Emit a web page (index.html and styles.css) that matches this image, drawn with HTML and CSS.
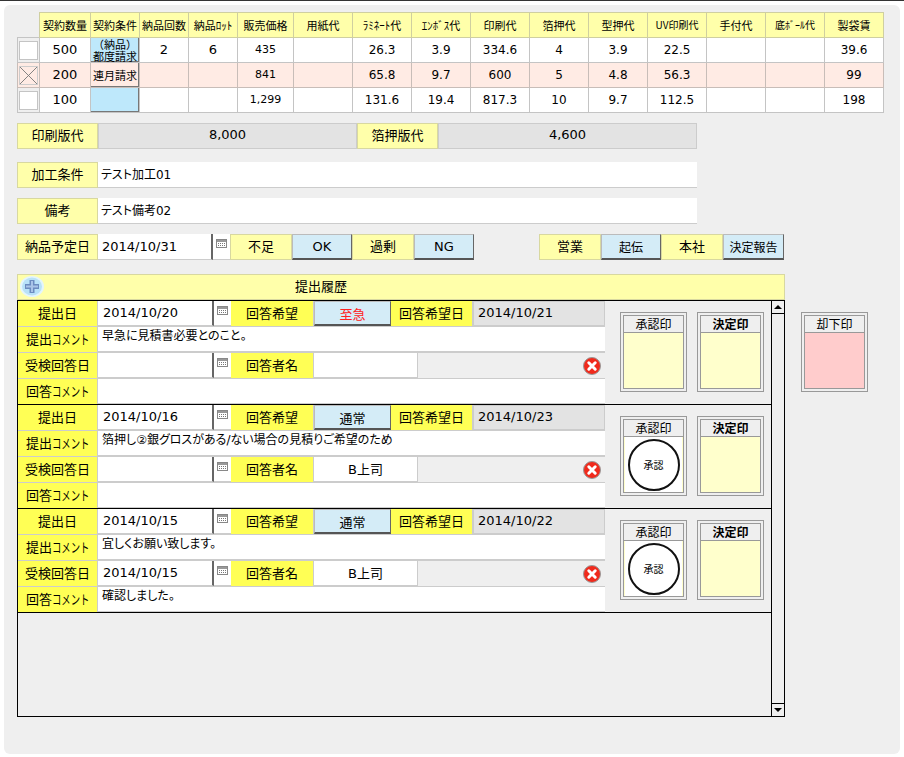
FILE: index.html
```html
<!DOCTYPE html>
<html lang="ja">
<head>
  <meta charset="UTF-8">
  <title>見積</title>
  <link rel="stylesheet" href="styles.css">
</head>
<body>
<svg class="defs" width="0" height="0">
  <symbol id="cal" viewBox="0 0 11 9">
    <rect x="0.5" y="0.5" width="10" height="8" fill="#fff" stroke="#888"/>
    <rect x="1" y="1" width="9" height="2" fill="#999"/>
    <path d="M2 4.5h7M2 6.5h7" stroke="#777" stroke-dasharray="1 1"/>
  </symbol>
  <symbol id="del" viewBox="0 0 18 18">
    <circle cx="9" cy="9" r="8.5" fill="#f02a1c" stroke="#999"/>
    <path d="M5.8 5.8l6.4 6.4M12.2 5.8l-6.4 6.4" stroke="#fff" stroke-width="3" stroke-linecap="round"/>
  </symbol>
</svg>

<div class="panel">
  <table class="prices">
    <tr>
      <th class="blank"></th><th>契約数量</th><th>契約条件</th><th>納品回数</th><th>納品ﾛｯﾄ</th><th>販売価格</th><th>用紙代</th><th>ﾗﾐﾈｰﾄ代</th><th>ｴﾝﾎﾞｽ代</th><th>印刷代</th><th>箔押代</th><th>型押代</th><th class="tiny">UV印刷代</th><th>手付代</th><th class="tiny">底ﾎﾞｰﾙ代</th><th>製袋賃</th>
    </tr>
    <tr>
      <td class="chk"><span class="box"></span></td><td class="big">500</td><td class="term">（納品）<br>都度請求</td><td class="big">2</td><td class="big">6</td><td class="price">435</td><td></td><td>26.3</td><td>3.9</td><td>334.6</td><td>4</td><td>3.9</td><td>22.5</td><td></td><td></td><td>39.6</td>
    </tr>
    <tr class="off">
      <td class="chk"><span class="box x">
        <svg width="19" height="19" viewBox="0 0 19 19"><path d="M0 0l19 19M19 0L0 19" stroke="#777"/></svg>
      </span></td><td class="big">200</td><td class="term plain">連月請求</td><td></td><td></td><td class="price">841</td><td></td><td>65.8</td><td>9.7</td><td>600</td><td>5</td><td>4.8</td><td>56.3</td><td></td><td></td><td>99</td>
    </tr>
    <tr>
      <td class="chk"><span class="box"></span></td><td class="big">100</td><td class="term"></td><td></td><td></td><td class="price">1,299</td><td></td><td>131.6</td><td>19.4</td><td>817.3</td><td>10</td><td>9.7</td><td>112.5</td><td></td><td></td><td>198</td>
    </tr>
  </table>

  <div class="line w680 first">
    <div class="lbl">印刷版代</div>
    <div class="val gray center grow">8,000</div>
    <div class="lbl">箔押版代</div>
    <div class="val gray center grow">4,600</div>
  </div>
  <div class="line w680 gap-l">
    <div class="lbl">加工条件</div>
    <div class="val grow note">テスト加工01</div>
  </div>
  <div class="line w680 gap-s">
    <div class="lbl">備考</div>
    <div class="val grow note">テスト備考02</div>
  </div>

  <div class="line w768 gap-s">
    <div class="lbl">納品予定日</div>
    <div class="val date">2014/10/31</div>
    <div class="calcell"><svg width="11" height="9"><use href="#cal"/></svg></div>
    <div class="lbl narrow">不足</div>
    <div class="btn">OK</div>
    <div class="lbl narrow">過剰</div>
    <div class="btn">NG</div>
    <div class="lbl narrow push">営業</div>
    <div class="btn sm">起伝</div>
    <div class="lbl narrow">本社</div>
    <div class="btn sm tight">決定報告</div>
  </div>

  <div class="history">
    <div class="left">
      <div class="hist-title">
        <svg class="plus" width="24" height="21" viewBox="0 0 24 21">
          <ellipse cx="12" cy="10.5" rx="12" ry="10.5" fill="#e4f5fd"/>
          <ellipse cx="12" cy="10.5" rx="10" ry="9" fill="#b9e2f8"/>
          <path d="M12 4v13M5 10.5h14" stroke="#6c8cc0" stroke-width="5"/>
          <path d="M12 5v11M6 10.5h12" stroke="#a9c4e8" stroke-width="2"/>
        </svg>
        提出履歴
      </div>
      <div class="listbox">
        <div class="entries">

          <div class="entry">
            <div class="fields">
              <div class="row">
                <div class="key">提出日</div>
                <div class="val date">2014/10/20</div>
                <div class="calcell"><svg width="11" height="9"><use href="#cal"/></svg></div>
                <div class="key k2">回答希望</div>
                <div class="btn urgent">至急</div>
                <div class="key k3">回答希望日</div>
                <div class="val gray grow">2014/10/21</div>
              </div>
              <div class="row">
                <div class="key">提出<span class="kana">コメント</span></div>
                <div class="val grow top">早急に見積書必要とのこと。</div>
              </div>
              <div class="row">
                <div class="key">受検回答日</div>
                <div class="val date"></div>
                <div class="calcell"><svg width="11" height="9"><use href="#cal"/></svg></div>
                <div class="key k2">回答者名</div>
                <div class="val name"></div>
                <div class="cancel"><svg width="18" height="18"><use href="#del"/></svg></div>
              </div>
              <div class="row">
                <div class="key">回答<span class="kana">コメント</span></div>
                <div class="val grow top"></div>
              </div>
            </div>
            <div class="stamp"><div class="stamp-in"><div class="stamp-head">承認印</div><div class="stamp-body"></div></div></div>
            <div class="stamp"><div class="stamp-in"><div class="stamp-head bold">決定印</div><div class="stamp-body"></div></div></div>
          </div>

          <div class="entry">
            <div class="fields">
              <div class="row">
                <div class="key">提出日</div>
                <div class="val date">2014/10/16</div>
                <div class="calcell"><svg width="11" height="9"><use href="#cal"/></svg></div>
                <div class="key k2">回答希望</div>
                <div class="btn wide">通常</div>
                <div class="key k3">回答希望日</div>
                <div class="val gray grow">2014/10/23</div>
              </div>
              <div class="row">
                <div class="key">提出<span class="kana">コメント</span></div>
                <div class="val grow top">箔押し②銀グロスがある/ない場合の見積りご希望のため</div>
              </div>
              <div class="row">
                <div class="key">受検回答日</div>
                <div class="val date"></div>
                <div class="calcell"><svg width="11" height="9"><use href="#cal"/></svg></div>
                <div class="key k2">回答者名</div>
                <div class="val name center">B上司</div>
                <div class="cancel"><svg width="18" height="18"><use href="#del"/></svg></div>
              </div>
              <div class="row">
                <div class="key">回答<span class="kana">コメント</span></div>
                <div class="val grow top"></div>
              </div>
            </div>
            <div class="stamp"><div class="stamp-in"><div class="stamp-head">承認印</div><div class="stamp-body"><div class="seal-bg"><div class="seal">承認</div></div></div></div></div>
            <div class="stamp"><div class="stamp-in"><div class="stamp-head bold">決定印</div><div class="stamp-body"></div></div></div>
          </div>

          <div class="entry">
            <div class="fields">
              <div class="row">
                <div class="key">提出日</div>
                <div class="val date">2014/10/15</div>
                <div class="calcell"><svg width="11" height="9"><use href="#cal"/></svg></div>
                <div class="key k2">回答希望</div>
                <div class="btn wide">通常</div>
                <div class="key k3">回答希望日</div>
                <div class="val gray grow">2014/10/22</div>
              </div>
              <div class="row">
                <div class="key">提出<span class="kana">コメント</span></div>
                <div class="val grow top">宜しくお願い致します。</div>
              </div>
              <div class="row">
                <div class="key">受検回答日</div>
                <div class="val date">2014/10/15</div>
                <div class="calcell"><svg width="11" height="9"><use href="#cal"/></svg></div>
                <div class="key k2">回答者名</div>
                <div class="val name center">B上司</div>
                <div class="cancel"><svg width="18" height="18"><use href="#del"/></svg></div>
              </div>
              <div class="row">
                <div class="key">回答<span class="kana">コメント</span></div>
                <div class="val grow top">確認しました。</div>
              </div>
            </div>
            <div class="stamp"><div class="stamp-in"><div class="stamp-head">承認印</div><div class="stamp-body"><div class="seal-bg"><div class="seal">承認</div></div></div></div></div>
            <div class="stamp"><div class="stamp-in"><div class="stamp-head bold">決定印</div><div class="stamp-body"></div></div></div>
          </div>

        </div>
        <div class="scroll">
          <div class="arrow"><span class="up"></span></div>
          <div class="arrow"><span class="down"></span></div>
        </div>
      </div>
    </div>
    <div class="stamp reject"><div class="stamp-in"><div class="stamp-head">却下印</div><div class="stamp-body"></div></div></div>
  </div>
</div>
</body>
</html>
```

FILE: styles.css
```css
html, body {
  margin: 0;
  height: 757px;
  overflow: hidden;
}
body {
  background: #fff;
  color: #000;
  font-family: "DejaVu Sans", "Noto Sans CJK JP", sans-serif;
  font-size: 13px;
  border-top: 1px solid #333;
  box-sizing: border-box;
}
.defs {
  position: absolute;
}
.panel {
  margin: 4px 4px 0;
  height: 749px;
  padding: 7px 13px 0;
  box-sizing: border-box;
  background: #efefef;
  border-radius: 6px;
}

/* price table */
.prices {
  border-collapse: collapse;
  table-layout: fixed;
  width: 867px;
  font-size: 12px;
}
.prices th {
  box-sizing: border-box;
  height: 25px;
  padding: 0;
  background: #ffffaa;
  border: 1px solid #cfcfa0;
  font-family: "Noto Sans CJK JP", sans-serif;
  font-weight: 400;
  font-size: 11px;
  line-height: 14px;
  width: 59px;
}
.prices th:nth-child(1) { width: 22px; background: none; border: 0; }
.prices th:nth-child(2) { width: 51px; }
.prices th:nth-child(3),
.prices th:nth-child(4),
.prices th:nth-child(5) { width: 49px; }
.prices th:nth-child(6) { width: 56px; }
.prices th.tiny { font-size: 10px; }
.prices td {
  box-sizing: border-box;
  height: 25px;
  padding: 0 0 1px;
  background: #fff;
  border: 1px solid #c4c4c4;
  line-height: 14px;
  text-align: center;
}
.prices .off td { background: #ffebe4; border-color: #c8bdb8; }
.prices td.big { font-size: 13px; }
.prices td.price { font-size: 11px; }
.prices td.chk { background: #efefef; padding: 0; }
.prices .off td.chk { background: #ffebe4; }
.box {
  display: block;
  width: 17px;
  height: 17px;
  margin: 0 auto;
  background: #fff;
  border: 1px solid #c4c4c4;
}
.box.x { background: none; border-color: #ccc; }
.box svg { display: block; width: 17px; height: 17px; }
.prices td.term {
  padding: 0;
  background: #bee8fb;
  box-shadow: inset -1px -1px 0 #777;
  font-family: "Noto Sans CJK JP", sans-serif;
  font-size: 11px;
  line-height: 12px;
}
.prices .off td.term.plain {
  background: #ffebe4;
}

/* form lines */
.line {
  display: flex;
  height: 26px;
}
.w680 { width: 680px; }
.w768 { width: 768px; }
.first { margin-top: 10px; }
.gap-l { margin-top: 13px; }
.gap-s { margin-top: 10px; }
.lbl {
  width: 81px;
  box-sizing: border-box;
  background: #ffffaa;
  border: 1px solid #d8d8a0;
  padding-bottom: 3px;
  font-family: "Noto Sans CJK JP", sans-serif;
  display: flex;
  align-items: center;
  justify-content: center;
}
.lbl.narrow { width: 62px; }
.push { margin-left: 65px; }
.val {
  box-sizing: border-box;
  background: #fff;
  border-bottom: 1px solid #ccc;
  padding: 0 0 1px 4px;
  font-family: "DejaVu Sans", "Noto Sans CJK JP", sans-serif;
  font-feature-settings: "palt";
  display: flex;
  align-items: center;
}
.val.gray {
  background: #e3e3e3;
  border: 1px solid #ccc;
  padding-bottom: 3px;
}
.val.center { justify-content: center; padding-left: 0; }
.val.note { font-size: 12px; padding: 0 0 3px 3px; }
.val.top { align-items: flex-start; padding: 0 0 0 4px; font-size: 12px; line-height: 18px; }
.grow { flex: 1; }
.date {
  width: 115px;
  border-right: 2px solid #666;
}
.calcell {
  width: 17px;
  box-sizing: border-box;
  background: #fff;
  border-bottom: 1px solid #ccc;
  padding: 5px 0 0 3px;
}
.calcell svg { display: block; }
.btn {
  width: 60px;
  box-sizing: border-box;
  background: #d4ecf7;
  border: 1px solid #bbb;
  border-right: 1px solid #666;
  border-bottom: 2px solid #555;
  font-family: "DejaVu Sans", "Noto Sans CJK JP", sans-serif;
  display: flex;
  align-items: center;
  justify-content: center;
}
.btn.sm { font-size: 12px; }
.btn.tight { width: 61px; }

/* history */
.history {
  display: flex;
  margin-top: 14px;
}
.left { width: 768px; }
.hist-title {
  position: relative;
  height: 26px;
  box-sizing: border-box;
  background: #ffffaa;
  border: 1px solid #d8d8a0;
  padding: 0 0 3px 277px;
  font-family: "Noto Sans CJK JP", sans-serif;
  display: flex;
  align-items: center;
}
.plus {
  position: absolute;
  left: 2px;
  top: 1px;
}
.listbox {
  display: flex;
  height: 417px;
  box-sizing: border-box;
  border: 1px solid #000;
}
.entries { flex: 1; }
.entry {
  display: flex;
  height: 104px;
  box-sizing: border-box;
  border-bottom: 1px solid #000;
}
.fields { width: 587px; }
.row {
  display: flex;
  height: 26px;
  box-sizing: border-box;
  border-bottom: 1px solid #ccc;
}
.row:last-child { height: 25px; border-bottom: 0; }
.key {
  width: 80px;
  box-sizing: border-box;
  background: #ffff55;
  border-right: 1px solid #ccc;
  padding-bottom: 3px;
  font-family: "Noto Sans CJK JP", sans-serif;
  display: flex;
  align-items: center;
  justify-content: center;
  white-space: nowrap;
}
.kana {
  display: inline-block;
  width: 37px;
  transform: scaleX(.72);
  transform-origin: left center;
}
.key.k2 { width: 83px; }
.key.k3 { width: 82px; }
.row .val.date { width: 116px; padding-left: 5px; }
.btn.urgent, .btn.wide { width: 77px; }
.btn.urgent { color: #f22; }
.name { width: 104px; border-right: 1px solid #ccc; }
.cancel {
  flex: 1;
  display: flex;
  align-items: center;
  justify-content: flex-end;
  padding-right: 4px;
}
.scroll {
  width: 13px;
  box-sizing: border-box;
  border-left: 1px solid #000;
  display: flex;
  flex-direction: column;
  justify-content: space-between;
}
.arrow {
  height: 12px;
  display: flex;
  align-items: center;
  justify-content: center;
}
.arrow:first-child { border-bottom: 1px solid #000; }
.arrow:last-child { border-top: 1px solid #000; }
.up, .down {
  width: 0;
  height: 0;
  border-left: 4px solid transparent;
  border-right: 4px solid transparent;
}
.up { border-bottom: 4px solid #000; }
.down { border-top: 4px solid #000; }

/* stamps */
.stamp {
  width: 67px;
  height: 80px;
  box-sizing: border-box;
  margin: 11px 0 0 10px;
  padding: 2px;
  border: 1px solid #999;
}
.entry .stamp:nth-child(2) { margin-left: 15px; }
.stamp-in {
  height: 100%;
  box-sizing: border-box;
  border: 1px solid #999;
  display: flex;
  flex-direction: column;
}
.stamp-head {
  height: 17px;
  box-sizing: border-box;
  border-bottom: 1px solid #999;
  font-family: "Noto Sans CJK JP", sans-serif;
  font-size: 12px;
  line-height: 16px;
  text-align: center;
}
.stamp-head.bold { font-weight: 700; }
.stamp-body {
  flex: 1;
  background: #ffffcc;
  padding: 0 1px;
}
.seal-bg {
  height: 100%;
  background: #fff;
  display: flex;
  align-items: center;
  justify-content: center;
}
.seal {
  width: 52px;
  height: 52px;
  box-sizing: border-box;
  border: 2px solid #111;
  border-radius: 50%;
  font-family: "Noto Sans CJK JP", sans-serif;
  font-size: 10px;
  display: flex;
  align-items: center;
  justify-content: center;
}
.reject {
  margin: 38px 0 0 16px;
}
.reject .stamp-body { background: #ffcccc; }
```
